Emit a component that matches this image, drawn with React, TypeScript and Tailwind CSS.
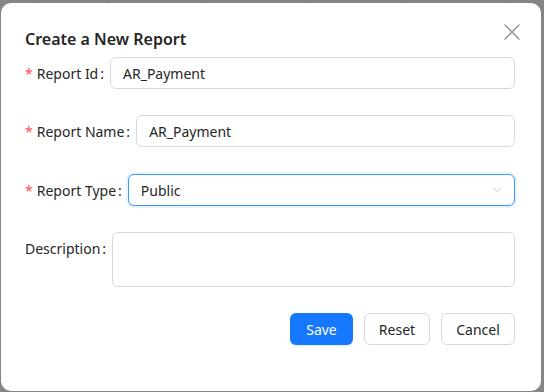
import { ChevronDown, X } from "lucide-react";

const font = { fontFamily: '"Noto Sans", "Open Sans", sans-serif' };

export default function App() {
  return (
    <div className="relative h-[392px] w-[544px] overflow-hidden bg-[#858585]" style={font}>
      <BackdropLines />
      <div className="relative ml-[1px] mt-[3px] flex h-[388px] w-[540px] flex-col rounded-[10px] bg-white pl-6 pr-[26px] pt-[24px]">
        <button className="absolute right-[15px] top-[15px] text-[#8c8c8c]">
          <X className="h-[28px] w-[28px]" strokeWidth={1.1} />
        </button>
        <h2 className="text-[16px] font-semibold leading-[24px] text-[#262626]">Create a New Report</h2>

        <div className="mt-[6px] flex flex-col">
          <FormRow label="Report Id" required>
            <Input value="AR_Payment" />
          </FormRow>
          <div className="mt-[26px]">
            <FormRow label="Report Name" required>
              <Input value="AR_Payment" />
            </FormRow>
          </div>
          <div className="mt-[27px]">
            <FormRow label="Report Type" required>
              <div className="flex h-[32px] flex-1 items-center justify-between rounded-[6px] border border-[#4096ff] pl-[12px] pr-[10px] shadow-[0_0_0_2px_rgba(5,145,255,0.1)]">
                <span className="text-[14px] text-[#262626]">Public</span>
                <ChevronDown className="h-[14px] w-[14px] text-[#bfbfbf]" strokeWidth={1.5} />
              </div>
            </FormRow>
          </div>
          <div className="mt-[26px] flex items-start">
            <Label text="Description" />
            <div className="h-[55px] flex-1 rounded-[6px] border border-[#d9d9d9]" />
          </div>
        </div>

        <div className="mt-[26px] flex justify-end gap-[11px]">
          <button className="h-[32px] w-[63px] rounded-[6px] bg-[#1677ff] text-[14px] text-white shadow-[0_2px_0_rgba(5,145,255,0.1)]">
            Save
          </button>
          <button className="h-[32px] w-[66px] rounded-[6px] border border-[#d9d9d9] text-[14px] text-[#262626]">
            Reset
          </button>
          <button className="h-[32px] w-[74px] rounded-[6px] border border-[#d9d9d9] text-[14px] text-[#262626]">
            Cancel
          </button>
        </div>
      </div>
    </div>
  );
}

function BackdropLines() {
  return (
    <div className="absolute inset-0">
      {[33, 107, 205, 305, 405, 505].map((x) => (
        <div key={x} className="absolute top-0 h-[4px] w-px bg-[#7a7a7a]" style={{ left: x }} />
      ))}
    </div>
  );
}

function Label({ text, required }: { text: string; required?: boolean }) {
  return (
    <label className="flex h-[32px] shrink-0 items-center text-[14px] text-[#262626]">
      {required && <span className="mr-[4px] text-[#ff4d4f]">*</span>}
      {text}
      <span className="ml-[2px] mr-[6px]">:</span>
    </label>
  );
}

interface FormRowProps {
  label: string;
  required?: boolean;
  children: React.ReactNode;
}

function FormRow({ label, required, children }: FormRowProps) {
  return (
    <div className="flex items-center">
      <Label text={label} required={required} />
      {children}
    </div>
  );
}

function Input({ value }: { value: string }) {
  return (
    <div className="flex h-[32px] flex-1 items-center rounded-[6px] border border-[#d9d9d9] px-[12px] text-[14px] text-[#262626]">
      {value}
    </div>
  );
}
